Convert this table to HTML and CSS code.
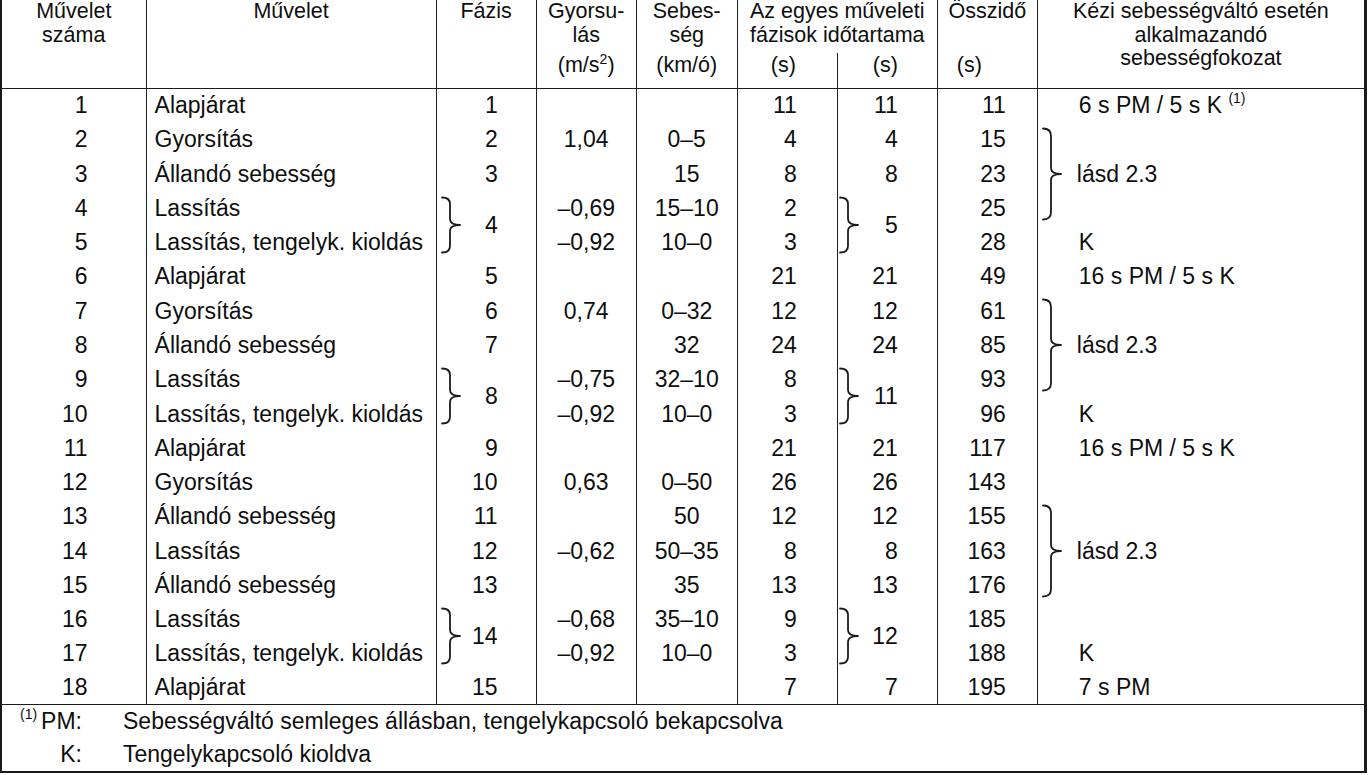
FILE: index.html
```html
<!DOCTYPE html>
<html lang="hu">
<head>
<meta charset="utf-8">
<title>Városi menetciklus</title>
<link rel="stylesheet" href="styles.css">
</head>
<body>
<table class="cycle">
  <colgroup>
    <col class="c-num"><col class="c-op"><col class="c-ph"><col class="c-acc"><col class="c-spd"><col class="c-t1"><col class="c-t2"><col class="c-tot"><col class="c-gear">
  </colgroup>
  <thead>
    <tr class="h1">
      <th rowspan="2">Művelet<br>száma</th>
      <th rowspan="2">Művelet</th>
      <th rowspan="2">Fázis</th>
      <th>Gyorsu-<br>lás</th>
      <th>Sebes-<br>ség</th>
      <th colspan="2">Az egyes műveleti<br>fázisok időtartama</th>
      <th>Összidő</th>
      <th rowspan="2">Kézi sebességváltó esetén<br>alkalmazandó<br>sebességfokozat</th>
    </tr>
    <tr class="h2">
      <th>(m/s<sup>2</sup>)</th>
      <th>(km/ó)</th>
      <th class="u-t1">(s)</th>
      <th class="u-t2">(s)</th>
      <th class="u-tot">(s)</th>
    </tr>
  </thead>
  <tbody>
    <tr><td class="n">1</td><td class="op">Alapjárat</td><td class="ph">1</td><td class="c"></td><td class="c"></td><td class="t1">11</td><td class="t2">11</td><td class="tot">11</td><td class="gear">6 s PM / 5 s K <sup class="fn">(1)</sup></td></tr>
    <tr><td class="n">2</td><td class="op">Gyorsítás</td><td class="ph">2</td><td class="c">1,04</td><td class="c">0–5</td><td class="t1">4</td><td class="t2">4</td><td class="tot">15</td>
      <td class="gear grp" rowspan="3"><div class="grp-in gear-in"><svg class="brace3" viewBox="0 0 20 94"><path d="M1 1.5 Q9 1.5 9 9 V41 Q9 47 19 47 Q9 47 9 53 V85 Q9 92.5 1 92.5"/></svg><span>lásd 2.3</span></div></td></tr>
    <tr><td class="n">3</td><td class="op">Állandó sebesség</td><td class="ph">3</td><td class="c"></td><td class="c">15</td><td class="t1">8</td><td class="t2">8</td><td class="tot">23</td></tr>
    <tr><td class="n">4</td><td class="op">Lassítás</td>
      <td class="ph grp" rowspan="2"><div class="grp-in"><svg class="brace2" viewBox="0 0 20 58"><path d="M1 1.5 Q9 1.5 9 8 V23 Q9 29 19 29 Q9 29 9 35 V50 Q9 56.5 1 56.5"/></svg><span>4</span></div></td>
      <td class="c">–0,69</td><td class="c">15–10</td><td class="t1">2</td>
      <td class="t2 grp" rowspan="2"><div class="grp-in"><svg class="brace2" viewBox="0 0 20 58"><path d="M1 1.5 Q9 1.5 9 8 V23 Q9 29 19 29 Q9 29 9 35 V50 Q9 56.5 1 56.5"/></svg><span>5</span></div></td>
      <td class="tot">25</td></tr>
    <tr><td class="n">5</td><td class="op">Lassítás, tengelyk. kioldás</td><td class="c">–0,92</td><td class="c">10–0</td><td class="t1">3</td><td class="tot">28</td><td class="gear">K</td></tr>
    <tr><td class="n">6</td><td class="op">Alapjárat</td><td class="ph">5</td><td class="c"></td><td class="c"></td><td class="t1">21</td><td class="t2">21</td><td class="tot">49</td><td class="gear">16 s PM / 5 s K</td></tr>
    <tr><td class="n">7</td><td class="op">Gyorsítás</td><td class="ph">6</td><td class="c">0,74</td><td class="c">0–32</td><td class="t1">12</td><td class="t2">12</td><td class="tot">61</td>
      <td class="gear grp" rowspan="3"><div class="grp-in gear-in"><svg class="brace3" viewBox="0 0 20 94"><path d="M1 1.5 Q9 1.5 9 9 V41 Q9 47 19 47 Q9 47 9 53 V85 Q9 92.5 1 92.5"/></svg><span>lásd 2.3</span></div></td></tr>
    <tr><td class="n">8</td><td class="op">Állandó sebesség</td><td class="ph">7</td><td class="c"></td><td class="c">32</td><td class="t1">24</td><td class="t2">24</td><td class="tot">85</td></tr>
    <tr><td class="n">9</td><td class="op">Lassítás</td>
      <td class="ph grp" rowspan="2"><div class="grp-in"><svg class="brace2" viewBox="0 0 20 58"><path d="M1 1.5 Q9 1.5 9 8 V23 Q9 29 19 29 Q9 29 9 35 V50 Q9 56.5 1 56.5"/></svg><span>8</span></div></td>
      <td class="c">–0,75</td><td class="c">32–10</td><td class="t1">8</td>
      <td class="t2 grp" rowspan="2"><div class="grp-in"><svg class="brace2" viewBox="0 0 20 58"><path d="M1 1.5 Q9 1.5 9 8 V23 Q9 29 19 29 Q9 29 9 35 V50 Q9 56.5 1 56.5"/></svg><span>11</span></div></td>
      <td class="tot">93</td></tr>
    <tr><td class="n">10</td><td class="op">Lassítás, tengelyk. kioldás</td><td class="c">–0,92</td><td class="c">10–0</td><td class="t1">3</td><td class="tot">96</td><td class="gear">K</td></tr>
    <tr><td class="n">11</td><td class="op">Alapjárat</td><td class="ph">9</td><td class="c"></td><td class="c"></td><td class="t1">21</td><td class="t2">21</td><td class="tot">117</td><td class="gear">16 s PM / 5 s K</td></tr>
    <tr><td class="n">12</td><td class="op">Gyorsítás</td><td class="ph">10</td><td class="c">0,63</td><td class="c">0–50</td><td class="t1">26</td><td class="t2">26</td><td class="tot">143</td><td class="gear"></td></tr>
    <tr><td class="n">13</td><td class="op">Állandó sebesség</td><td class="ph">11</td><td class="c"></td><td class="c">50</td><td class="t1">12</td><td class="t2">12</td><td class="tot">155</td>
      <td class="gear grp" rowspan="3"><div class="grp-in gear-in"><svg class="brace3" viewBox="0 0 20 94"><path d="M1 1.5 Q9 1.5 9 9 V41 Q9 47 19 47 Q9 47 9 53 V85 Q9 92.5 1 92.5"/></svg><span>lásd 2.3</span></div></td></tr>
    <tr><td class="n">14</td><td class="op">Lassítás</td><td class="ph">12</td><td class="c">–0,62</td><td class="c">50–35</td><td class="t1">8</td><td class="t2">8</td><td class="tot">163</td></tr>
    <tr><td class="n">15</td><td class="op">Állandó sebesség</td><td class="ph">13</td><td class="c"></td><td class="c">35</td><td class="t1">13</td><td class="t2">13</td><td class="tot">176</td></tr>
    <tr><td class="n">16</td><td class="op">Lassítás</td>
      <td class="ph grp" rowspan="2"><div class="grp-in"><svg class="brace2" viewBox="0 0 20 58"><path d="M1 1.5 Q9 1.5 9 8 V23 Q9 29 19 29 Q9 29 9 35 V50 Q9 56.5 1 56.5"/></svg><span>14</span></div></td>
      <td class="c">–0,68</td><td class="c">35–10</td><td class="t1">9</td>
      <td class="t2 grp" rowspan="2"><div class="grp-in"><svg class="brace2" viewBox="0 0 20 58"><path d="M1 1.5 Q9 1.5 9 8 V23 Q9 29 19 29 Q9 29 9 35 V50 Q9 56.5 1 56.5"/></svg><span>12</span></div></td>
      <td class="tot">185</td><td class="gear"></td></tr>
    <tr><td class="n">17</td><td class="op">Lassítás, tengelyk. kioldás</td><td class="c">–0,92</td><td class="c">10–0</td><td class="t1">3</td><td class="tot">188</td><td class="gear">K</td></tr>
    <tr><td class="n">18</td><td class="op">Alapjárat</td><td class="ph">15</td><td class="c"></td><td class="c"></td><td class="t1">7</td><td class="t2">7</td><td class="tot">195</td><td class="gear">7 s PM</td></tr>
  </tbody>
  <tfoot>
    <tr>
      <td colspan="9" class="notes">
        <div class="note-grid">
          <span class="lbl"><sup class="fn-note">(1)</sup>PM:</span><span>Sebességváltó semleges állásban, tengelykapcsoló bekapcsolva</span>
          <span class="lbl">K:</span><span>Tengelykapcsoló kioldva</span>
        </div>
      </td>
    </tr>
  </tfoot>
</table>
</body>
</html>
```

FILE: styles.css
```css
html, body {
  margin: 0;
  padding: 0;
  background: #ffffff;
}

body {
  font-family: "Liberation Sans", Arial, sans-serif;
  color: #0e0e0e;
}

.cycle {
  border-collapse: collapse;
  table-layout: fixed;
  width: 1367px;
  border-left: 2px solid #1a1a1a;
  border-right: 3px solid #1a1a1a;
  border-bottom: 2px solid #1a1a1a;
}

.c-num { width: 145px; }
.c-op { width: 290px; }
.c-ph { width: 100px; }
.c-acc { width: 100px; }
.c-spd { width: 101px; }
.c-t1 { width: 100px; }
.c-t2 { width: 100px; }
.c-tot { width: 100px; }
.c-gear { width: 328px; }

th, td {
  border-left: 1px solid #1e1e1e;
  border-right: 1px solid #1e1e1e;
  padding: 0;
}

/* header */
thead {
  border-bottom: 1px solid #1a1a1a;
}

th {
  font-weight: normal;
  font-size: 21.5px;
  line-height: 23.5px;
  text-align: center;
  vertical-align: top;
}

.h1 { height: 53px; }
.h2 { height: 35px; }
.h2 th { padding-top: 1px; }

th sup {
  font-size: 14px;
  line-height: 0;
  vertical-align: 8px;
}

.h2 .u-t1 { text-align: left; padding-left: 33px; }
.h2 .u-t2 { text-align: left; padding-left: 35px; }
.h2 .u-tot { text-align: left; padding-left: 19px; }

/* body */
tbody tr { height: 34.28px; }

tbody td {
  font-size: 23px;
  line-height: 26px;
  vertical-align: middle;
  white-space: nowrap;
}

.n { text-align: right; padding-right: 58px; }
.op { text-align: left; padding-left: 8px; }
.ph { text-align: right; padding-right: 38px; }
.c { text-align: center; }
.t1 { text-align: right; padding-right: 40px; }
.t2 { text-align: right; padding-right: 39px; }
.tot { text-align: right; padding-right: 31px; }
.gear { text-align: left; padding-left: 41px; }

.fn {
  font-size: 14px;
  line-height: 0;
  vertical-align: 10px;
}

/* grouped (braced) cells */
.grp-in {
  display: flex;
  align-items: center;
  justify-content: space-between;
}

.ph.grp { padding-left: 4px; }
.t2.grp { padding-left: 1px; }
.gear.grp { padding-left: 4px; }

.gear-in {
  justify-content: flex-start;
  gap: 15px;
}

.brace2, .brace3 {
  width: 20px;
  flex: none;
  fill: none;
  stroke: #1a1a1a;
  stroke-width: 1.8;
  stroke-linecap: round;
  stroke-linejoin: round;
}

.brace2 { height: 58px; }
.brace3 { height: 94px; }

/* footnotes */
tfoot td.notes {
  border-top: 1px solid #1a1a1a;
  padding: 0;
}

.note-grid {
  display: grid;
  grid-template-columns: 80px auto;
  column-gap: 41px;
  font-size: 23px;
  line-height: 33px;
}

.lbl { text-align: right; }

.fn-note {
  font-size: 14px;
  line-height: 0;
  vertical-align: 10px;
  margin-right: 4px;
}
```
